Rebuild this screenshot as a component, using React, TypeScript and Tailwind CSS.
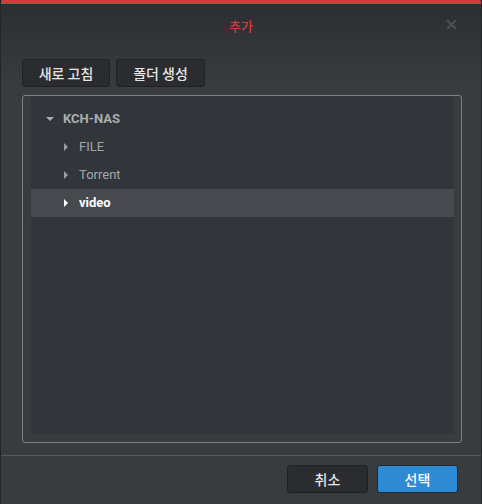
import { useState } from 'react';

const KR = { fontFamily: '"Noto Sans CJK KR", "Noto Sans", sans-serif' };
const LATIN = { fontFamily: 'Roboto, "Noto Sans CJK KR", sans-serif' };

// small triangle caret
const Caret = ({ open, color }: { open?: boolean; color: string }) => (
  <svg width="8" height="8" viewBox="0 0 8 8" className="shrink-0">
    {open ? <polygon points="0,2 8,2 4,6" fill={color} /> : <polygon points="2,0 6,4 2,8" fill={color} />}
  </svg>
);

const TreeRow = ({
  label,
  depth,
  open,
  selected,
  onClick,
}: {
  label: string;
  depth: number;
  open?: boolean;
  selected?: boolean;
  onClick?: () => void;
}) => (
  <div
    onClick={onClick}
    className={`flex h-[28px] cursor-default items-center ${selected ? 'bg-[#46494d]' : ''}`}
    style={{ paddingLeft: depth === 0 ? 15 : 31 }}
  >
    <div className="flex w-[17px] items-center">
      <Caret open={open} color={selected ? '#ffffff' : depth === 0 ? '#a7abaf' : '#9a9ea2'} />
    </div>
    <span
      className={`text-[13px] ${depth === 0 ? 'font-bold text-[#a9adb1]' : selected ? 'font-bold text-white' : 'text-[#a3a7ab]'}`}
      style={LATIN}
    >
      {label}
    </span>
  </div>
);

export default function App() {
  const [selected, setSelected] = useState('video');
  const folders = ['FILE', 'Torrent', 'video'];

  return (
    <div className="flex h-[504px] w-[482px] flex-col border-x border-[#232528] bg-[#383c3f]" style={KR}>
      <div className="h-[4px] rounded-t-[2px] bg-[#d23a3e]" />
      <div className="bg-gradient-to-b from-[#2c2e32] to-[#383c3f]">
        <div className="relative flex h-[43px] items-center justify-center">
          <span className="text-[13px] font-medium text-[#d9393c]">추가</span>
          <svg width="11" height="11" viewBox="0 0 11 11" className="absolute right-[24px] top-[15px]">
            <path d="M1 1 L10 10 M10 1 L1 10" stroke="#4b4f53" strokeWidth="2.2" />
          </svg>
        </div>
        <div className="flex gap-[6px] px-[21px] pt-[12px]">
          <button className="h-[28px] w-[88px] rounded-[3px] border border-[#1f2123] bg-[#2a2c2f] text-[14px] font-medium text-[#e4e4e4]">
            새로 고침
          </button>
          <button className="h-[28px] w-[89px] rounded-[3px] border border-[#1f2123] bg-[#2a2c2f] text-[14px] font-medium text-[#e4e4e4]">
            폴더 생성
          </button>
        </div>
      </div>

      <div className="ml-[21px] mr-[19px] mt-[8px] h-[348px] rounded-[3px] border border-[#7d8186] pb-[8px] pl-[8px] pr-[7px]">
        <div className="h-full bg-[#32363a] pt-[9px]">
          <TreeRow label="KCH-NAS" depth={0} open />
          {folders.map((f) => (
            <TreeRow key={f} label={f} depth={1} selected={selected === f} onClick={() => setSelected(f)} />
          ))}
        </div>
      </div>

      <div className="mt-[12px] border-t border-[#55595d]" />
      <div className="flex justify-end gap-[9px] pr-[23px] pt-[9px]">
        <button className="h-[28px] w-[81px] rounded-[3px] border border-[#1f2123] bg-[#2a2c2f] text-[14px] font-medium text-[#e4e4e4]">
          취소
        </button>
        <button className="h-[28px] w-[81px] rounded-[3px] border border-[#1d2a36] bg-[#2e8ad3] text-[14px] font-medium text-white">
          선택
        </button>
      </div>
    </div>
  );
}
